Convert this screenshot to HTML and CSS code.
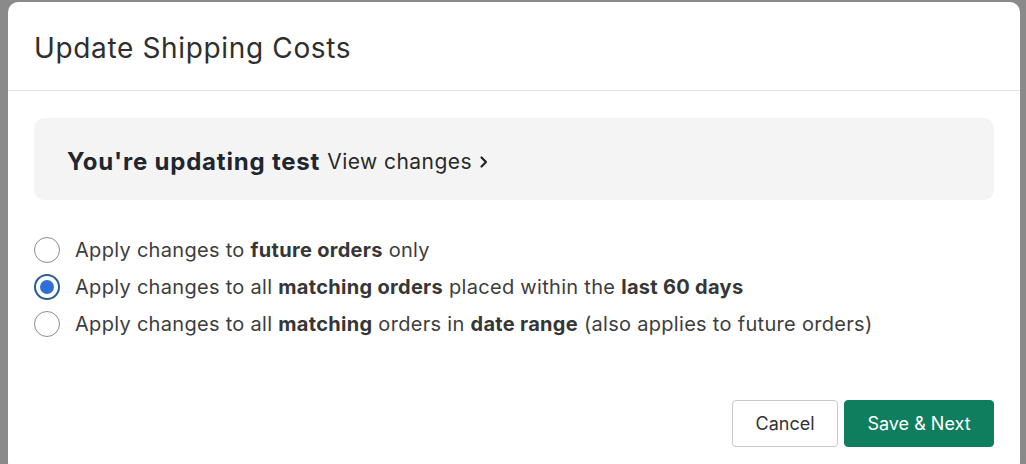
FILE: index.html
```html
<!DOCTYPE html>
<html>
<head>
<meta charset="utf-8">
<link rel="stylesheet" href="styles.css">
</head>
<body>
<div class="modal">
  <div class="modal-header">
    <h1 class="title">Update Shipping Costs</h1>
  </div>
  <div class="modal-body">
    <div class="info-box">
      <span class="info-strong">You're updating test</span>
      <a class="info-link">View changes
        <svg class="chev" width="10" height="14" viewBox="0 0 10 14"><path d="M2.5 2.5 L7 7 L2.5 11.5" fill="none" stroke="#222" stroke-width="2.2" stroke-linecap="round" stroke-linejoin="round"/></svg>
      </a>
    </div>
    <div class="options">
      <label class="option"><span class="radio"></span><span class="opt-text">Apply changes to <b>future orders</b> only</span></label>
      <label class="option"><span class="radio checked"></span><span class="opt-text">Apply changes to all <b>matching orders</b> placed within the <b>last 60 days</b></span></label>
      <label class="option"><span class="radio"></span><span class="opt-text">Apply changes to all <b>matching</b> orders in <b>date range</b> (also applies to future orders)</span></label>
    </div>
  </div>
  <div class="modal-footer">
    <button class="btn btn-secondary">Cancel</button>
    <button class="btn btn-primary">Save &amp; Next</button>
  </div>
</div>
</body>
</html>
```
FILE: styles.css
```css
html, body {
  margin: 0;
  padding: 0;
  height: 100%;
}
body {
  background: #8a8a8a;
  font-family: Inter, "Liberation Sans", Arial, sans-serif;
  padding: 2px 6px 0 8px;
  box-sizing: border-box;
  overflow: hidden;
}
.modal {
  background: #fff;
  border-radius: 10px;
  height: 470px;
  display: flex;
  flex-direction: column;
}
.modal-header {
  height: 89px;
  border-bottom: 1px solid #e2e2e2;
  padding: 0 26px;
  display: flex;
  align-items: center;
  box-sizing: border-box;
}
.title {
  margin: 0;
  font-weight: 400;
  font-size: 28px;
  color: #2e2e2e;
  letter-spacing: 0.65px;
  padding-top: 4px;
}
.modal-body {
  padding: 27px 26px 0 26px;
}
.info-box {
  background: #f4f4f4;
  border-radius: 10px;
  height: 82px;
  display: flex;
  align-items: center;
  padding: 4px 33px 0;
  box-sizing: border-box;
  gap: 7px;
}
.info-strong {
  font-weight: 700;
  font-size: 24px;
  color: #1f2630;
  letter-spacing: 0.8px;
}
.info-link {
  font-size: 21px;
  color: #2a2a2a;
  letter-spacing: 0.45px;
  display: inline-flex;
  align-items: center;
  gap: 7px;
}
.chev { margin-top: 1px; }
.options {
  margin-top: 37px;
  display: flex;
  flex-direction: column;
  gap: 11px;
}
.option {
  display: flex;
  align-items: center;
  gap: 15px;
  height: 26px;
}
.radio {
  width: 26px;
  height: 26px;
  border: 1px solid #8c8c8c;
  border-radius: 50%;
  box-sizing: border-box;
  flex: none;
  position: relative;
}
.radio.checked {
  border: 2px solid #2c5c92;
}
.radio.checked::after {
  content: "";
  position: absolute;
  left: 4px;
  top: 4px;
  width: 14px;
  height: 14px;
  border-radius: 50%;
  background: #2f6fd6;
}
.opt-text {
  font-size: 20px;
  color: #3d3d3d;
  letter-spacing: 0.3px;
}
.opt-text b {
  font-weight: 700;
  color: #363636;
}
.modal-footer {
  margin-top: auto;
  display: flex;
  justify-content: flex-end;
  gap: 6px;
  padding: 0 26px 25px 0;
}
.btn {
  height: 47px;
  font-family: inherit;
  font-size: 18px;
  border-radius: 4px;
  cursor: pointer;
}
.btn-secondary {
  width: 106px;
  background: #fff;
  border: 1px solid #c9c9c9;
  color: #333;
}
.btn-primary {
  width: 150px;
  background: #0f7e5e;
  border: 1px solid #0f7e5e;
  color: #fff;
}
```
